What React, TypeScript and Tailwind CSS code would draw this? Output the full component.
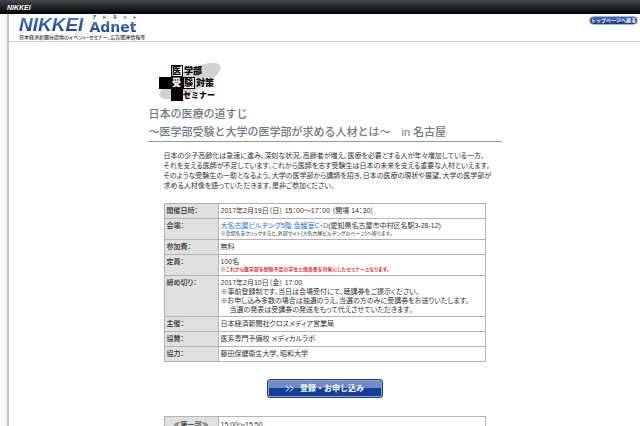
import type { ReactNode } from 'react';

const JP = "font-['Liberation_Sans','Noto_Sans_CJK_JP',sans-serif]";

type RowProps = { label: string; children: ReactNode };

const Row = ({ label, children }: RowProps) => (
  <tr className="h-[15px]">
    <th
      scope="row"
      className="w-[54px] border border-[#b4b4b4] bg-[#e0e0e0] px-[2px] py-[2px] text-left align-top font-medium"
    >
      {label}
    </th>
    <td className="border border-[#b4b4b4] px-[2px] py-[2px] align-top">{children}</td>
  </tr>
);

const SeminarLogo = () => (
  <svg
    width="66"
    height="40"
    viewBox="0 0 66 40"
    role="img"
    aria-label="医学部受験対策セミナー"
    className="font-['Noto_Sans_CJK_JP',sans-serif] font-black [font-feature-settings:normal]"
  >
    <ellipse cx="31" cy="18" rx="34" ry="11" fill="#d2d2d2" transform="rotate(-27 31 18)" />
    <path d="M12 2h12v12h12v12H24v12H12V26H0V14h12z" fill="#000" />
    <rect x="13" y="3" width="10" height="10" fill="#fff" />
    <rect x="25" y="15" width="10" height="10" fill="#fff" />
    <g fontSize="9">
      <text x="13" y="11">医</text>
      <text x="25" y="11">学部</text>
      <text x="13" y="23" fill="#fff">受</text>
      <text x="25" y="23">験</text>
      <text x="37" y="23">対策</text>
      <text x="24" y="35" fontSize="8">セミナー</text>
    </g>
  </svg>
);

const Header = () => (
  <header className="flex h-[28px] items-start justify-between border-b border-[#cfcfcf] pl-[10px] pr-[2px]">
    <div className="pt-px">
      <div className="flex h-[19px] items-start gap-[5px] text-[#1d4398]">
        <span className="bg-linear-to-b from-[#5c82bd] to-[#0c3390] bg-clip-text pr-px font-['Liberation_Sans',sans-serif] text-[19px]/[19px] font-bold italic text-transparent">
          NIKKEI
        </span>
        <span className="flex flex-col">
          <span className="flex justify-between pl-[3px] text-[4px]/[5px] font-black">
            {['ア', 'ド', 'ネ', 'ッ', 'ト'].map((c) => (
              <span key={c}>{c}</span>
            ))}
          </span>
          <span className="bg-linear-to-b from-[#5c82bd] to-[#0c3390] bg-clip-text font-['DejaVu_Sans',sans-serif] text-[14px]/[14px] font-bold text-transparent">
            Adnet
          </span>
        </span>
      </div>
      <p className="text-[5px]/[6px] text-black">
        日本経済新聞社提供のイベント・セミナー、広告関連情報等
      </p>
    </div>
    <a
      href="#top"
      className="mt-[2px] rounded-full border border-[#9fb2dc] bg-linear-to-b from-[#4a69ae] to-[#1a3c8c] px-px text-[5px]/[7px] font-bold text-white [font-feature-settings:normal]"
    >
      トップページへ戻る
    </a>
  </header>
);

const App = () => {
  return (
    <div
      lang="ja"
      className={`${JP} flex min-h-screen flex-col bg-white text-[7px]/[9px] text-[#333] [font-feature-settings:'palt']`}
    >
      <div className="flex h-[14px] items-center bg-linear-to-b from-[#45494d] to-[#050505] pl-[7px]">
        <span className="font-['Liberation_Sans',sans-serif] text-[7px] font-bold italic text-white">NIKKEI</span>
      </div>

      <div className="flex grow">
        {/* shaded page edge */}
        <div className="w-[9px] shrink-0 border-r-2 border-[#c8c4c6] bg-linear-to-r from-white to-[#f0f0f0]" />

        <div className="min-w-0 grow">
          <Header />

          <main className="mx-auto w-full max-w-[354px] pt-[21px]">
            <div className="pl-[11px]">
              <SeminarLogo />
            </div>
            <h1 className="mt-[2px] whitespace-nowrap border-b border-[#999] text-[11px]/[18px] font-medium text-[#6c7a88] [font-feature-settings:normal]">
              <span className="block pl-px">日本の医療の道すじ</span>
              <span className="block pl-px">〜医学部受験と大学の医学部が求める人材とは〜　in 名古屋</span>
            </h1>

            <div className="px-4">
              <p className="mt-[9px] whitespace-nowrap text-[7px]/[10px]">
                日本の少子高齢化は急速に進み、深刻な状況。高齢者が増え、医療を必要とする人が年々増加している一方、
                <br />
                それを支える医師が不足しています。これから医師を志す受験生は日本の未来を支える重要な人材といえます。
                <br />
                そのような受験生の一助となるよう、大学の医学部から講師を招き、日本の医療の現状や展望、大学の医学部が
                <br />
                求める人材像を語っていただきます。是非ご参加ください。
              </p>

              <table className="mt-[12px] w-full border-collapse">
                <tbody>
                  <Row label="開催日時：">2017年2月19日（日） 15：00〜17：00 （開場 14：30）</Row>
                  <Row label="会場：">
                    <a href="#map" className="text-[#1a73e8]">
                      大名古屋ビルヂング5階 会議室C・D
                    </a>
                    (愛知県名古屋市中村区名駅3-28-12)
                    <p className="text-[5px]/[7px]">
                      ※会場名をクリックすると、外部サイト(大名古屋ビルヂングのページ)へ移ります。
                    </p>
                  </Row>
                  <Row label="参加費：">無料</Row>
                  <Row label="定員：">
                    100名
                    <p className="text-[5px]/[7px] font-medium text-[#f00000]">
                      ※これから医学部を受験予定の学生と保護者を対象にしたセミナーとなります。
                    </p>
                  </Row>
                  <Row label="締め切り：">
                    2017年2月10日（金） 17:00
                    <br />
                    ※事前登録制です。当日は会場受付にて、聴講券をご提示ください。
                    <br />
                    ※お申し込み多数の場合は抽選のうえ、当選の方のみに受講券をお送りいたします。
                    <p className="pl-[9px]">当選の発表は受講券の発送をもって代えさせていただきます。</p>
                  </Row>
                  <Row label="主催：">日本経済新聞社クロスメディア営業局</Row>
                  <Row label="協賛：">医系専門予備校 メディカルラボ</Row>
                  <Row label="協力：">藤田保健衛生大学、昭和大学</Row>
                </tbody>
              </table>

              <div className="flex justify-center pb-[18px] pt-[17px]">
                <button
                  type="button"
                  className="flex h-[19px] w-[116px] items-center justify-center gap-[6px] rounded-[3px] border border-[#1c3f8e] bg-linear-to-b from-[#6f8cc8] from-45% to-[#143f96] to-50% text-[8px] font-bold text-white ring-1 ring-inset ring-[#8fa6d6] [font-feature-settings:normal]"
                >
                  <svg width="9" height="7" viewBox="0 0 9 7" fill="none" stroke="#fff" aria-hidden="true">
                    <path d="M1 .5l3 3-3 3M5 .5l3 3-3 3" />
                  </svg>
                  登録・お申し込み
                </button>
              </div>

              <table className="w-full border-collapse">
                <tbody>
                  <tr className="h-[15px]">
                    <th
                      scope="row"
                      className="w-[54px] border border-[#b4b4b4] bg-[#e0e0e0] py-[2px] text-center font-medium"
                    >
                      ≪第一部≫
                    </th>
                    <td className="border border-[#b4b4b4] px-[2px] py-[2px]">15:00〜15:50</td>
                  </tr>
                </tbody>
              </table>
            </div>
          </main>
        </div>
      </div>
    </div>
  );
};

export default App;
